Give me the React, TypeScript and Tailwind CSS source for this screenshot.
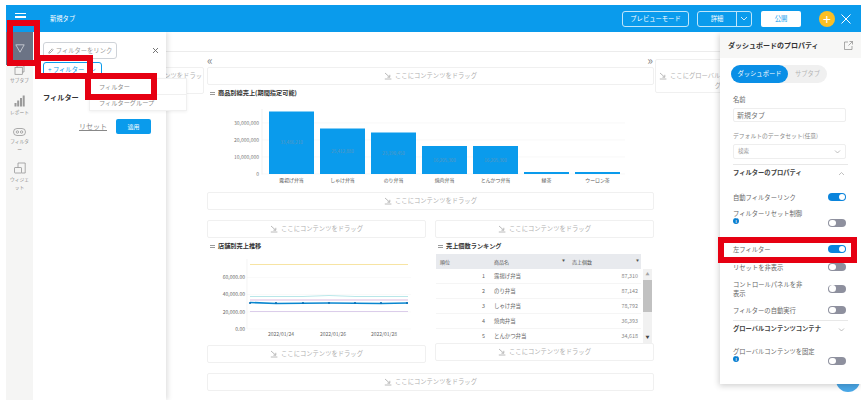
const FONT = "font-['Noto_Sans_CJK_JP','Noto_Sans',sans-serif]";

function DragIcon() {
  return (
    <svg width="8" height="8" viewBox="0 0 8 8" className="shrink-0" fill="none" stroke="#a8a8a8" strokeWidth="0.8">
      <path d="M1 1 L5.5 5 M5.8 2.8 V5.2 H3.4 M0.8 7 H7.4" />
    </svg>
  );
}

function DropZone({ className = "" }: { className?: string }) {
  return (
    <div className={`h-[18px] flex items-center justify-center gap-[3px] border border-[#f0f0f0] rounded-[2px] text-[6.3px] text-[#b0b0b0] ${className}`}>
      <DragIcon />
      <span>ここにコンテンツをドラッグ</span>
    </div>
  );
}

function Title({ children }: { children: React.ReactNode }) {
  return (
    <div className="h-[16px] flex items-center gap-[3px] pl-[3px] text-[6.2px] font-bold text-[#333]">
      <span className="w-[5px] h-[3px] border-y border-[#9a9a9a] shrink-0" />
      <span>{children}</span>
    </div>
  );
}

function SideItem({ icon, label, className = "" }: { icon: React.ReactNode; label: React.ReactNode; className?: string }) {
  return (
    <div className={`flex flex-col items-center text-[4.7px] leading-[7.5px] text-[#8a8a8a] text-center ${className}`}>
      {icon}
      <span className="mt-[2px] w-[20px]">{label}</span>
    </div>
  );
}

function Toggle({ on = false }: { on?: boolean }) {
  return (
    <span className={`w-[18px] h-[8px] rounded-full flex items-center shrink-0 px-[1px] ${on ? "bg-[#0a84dc] justify-end" : "bg-[#8e909e] justify-start"}`}>
      <span className="w-[6.5px] h-[6.5px] rounded-full bg-white" />
    </span>
  );
}

function Info() {
  return (
    <span className="w-[6px] h-[6px] rounded-full bg-[#0a7fd0] flex items-center justify-center text-[4px] leading-none font-bold text-white">i</span>
  );
}

function Chevron({ up = false }: { up?: boolean }) {
  return (
    <svg width="7" height="5" viewBox="0 0 7 5" fill="none" stroke="#a5a5a5" strokeWidth="0.7">
      <path d={up ? "M1 4 L3.5 1.5 L6 4" : "M1 1.5 L3.5 4 L6 1.5"} />
    </svg>
  );
}

function BarChart() {
  const bars = [
    [269, 110.5, "露揚げ弁当"],
    [320, 127.5, "しゃけ弁当"],
    [371, 131.5, "のり弁当"],
    [422, 145, "焼肉弁当"],
    [473, 145, "とんかつ弁当"],
    [524, 171, "緑茶"],
    [575, 171, "ウーロン茶"],
  ] as const;
  const ticks = [["30,000,000", 122], ["20,000,000", 139], ["10,000,000", 156], ["0", 173]] as const;
  return (
    <svg viewBox="207 100 447 91" width="447" height="91" className="block">
      {ticks.map(([t, y]) => (
        <g key={t}>
          <line x1="262" x2="625" y1={y} y2={y} stroke="#f3f3f3" strokeWidth="0.6" />
          <text x="259" y={y + 1.8} textAnchor="end" fontSize="5" fill="#777">{t}</text>
        </g>
      ))}
      <line x1="262" x2="262" y1="108" y2="173.5" stroke="#e8e8e8" strokeWidth="0.6" />
      {bars.map(([x, y, label]) => (
        <g key={label}>
          <rect x={x} y={y} width="45" height={173 - y} fill="#0a9bec" />
          {y < 160 && (
            <text x={x + 22.5} y={(y + 173) / 2 + 1.5} textAnchor="middle" fontSize="4.5" fill="#5d97bd">
              {y < 120 ? "33,486,210" : y < 130 ? "25,412,880" : y < 140 ? "23,190,450" : "16,205,300"}
            </text>
          )}
          <text x={x + 22.5} y="181" textAnchor="middle" fontSize="4.9" fill="#555">{label}</text>
        </g>
      ))}
    </svg>
  );
}

function LineChart() {
  const ticks = [["60,000.00", 276.5], ["40,000.00", 293.5], ["20,000.00", 311], ["0.00", 328]] as const;
  const dots = [250, 276, 303, 329, 355, 381, 407];
  return (
    <svg viewBox="207 253 219 91" width="219" height="91" className="block">
      {ticks.map(([t, y]) => (
        <g key={t}>
          <line x1="247" x2="411" y1={y} y2={y} stroke="#f6f6f6" strokeWidth="0.6" />
          <text x="245" y={y + 1.8} textAnchor="end" fontSize="5" fill="#666">{t}</text>
        </g>
      ))}
      <line x1="247" x2="247" y1="258" y2="328" stroke="#ececec" strokeWidth="0.6" />
      <line x1="250" x2="408" y1="263.5" y2="263.5" stroke="#f5dd8c" strokeWidth="0.8" />
      <path d="M250 295.5 L303 295.5 L329 294.5 L355 295.5 L408 295.5" fill="none" stroke="#9bdce0" strokeWidth="0.7" />
      <line x1="250" x2="408" y1="299" y2="299" stroke="#c08fc9" strokeWidth="0.6" />
      <path d="M250 301.5 L276 302.5 L329 302 L381 302.5 L408 302" fill="none" stroke="#0a86cf" strokeWidth="1.6" />
      {dots.map((x) => <circle key={x} cx={x} cy="302" r="1.1" fill="#0a6fb4" />)}
      <line x1="250" x2="408" y1="310.5" y2="310.5" stroke="#cdb9e3" strokeWidth="0.7" />
      {[["2022/01/24", 281], ["2022/01/26", 333], ["2022/01/28", 384]].map(([t, x]) => (
        <text key={t} x={x} y="335" textAnchor="middle" fontSize="5" fill="#666">{t}</text>
      ))}
    </svg>
  );
}

function RankTable() {
  const rows = [
    [1, "露揚げ弁当", "87,310"],
    [2, "のり弁当", "87,142"],
    [3, "しゃけ弁当", "78,792"],
    [4, "焼肉弁当", "36,393"],
    [5, "とんかつ弁当", "34,618"],
  ] as const;
  return (
    <div className="ml-[1px] text-[5.4px] text-[#666]">
      <div className="w-[205px] h-[15px] bg-[#e8eaee] grid grid-cols-[54px_78px_73px] items-center text-[#555] text-[5px]">
        <span className="pl-[4px]">順位</span>
        <span className="pl-[4px] pr-[3px] flex items-center justify-between"><span>商品名</span><span className="text-[3px]">▼</span></span>
        <span className="pl-[4px] pr-[2px] flex items-center justify-between"><span>売上個数</span><span className="text-[3px]">▼</span></span>
      </div>
      <div className="flex h-[74px]">
        <div className="w-[205px] overflow-hidden">
          {rows.map(([n, name, v]) => (
            <div key={n} className="h-[15px] shrink-0 grid grid-cols-[54px_78px_73px] items-center border-b border-[#f5f5f5]">
              <span className="text-right pr-[5px]">{n}</span>
              <span className="pl-[4px]">{name}</span>
              <span className="text-right pr-[3px] text-[#888]">{v}</span>
            </div>
          ))}
        </div>
        <div className="ml-[2px] w-[9px] bg-[#f1f1f1] flex flex-col items-center justify-between">
          <span className="h-[11px] text-[4px] leading-[11px] text-[#a5a5a5]">▲</span>
          <span className="w-full h-[32px] bg-[#c1c1c1] mb-auto" />
          <span className="h-[11px] text-[4px] leading-[11px] text-[#444]">▼</span>
        </div>
      </div>
    </div>
  );
}

function PanelRow({ children, toggle = false, on = false, className = "", h = "h-[10px]" }: { children: React.ReactNode; toggle?: boolean; on?: boolean; className?: string; h?: string }) {
  return (
    <div className={`flex items-center justify-between pr-[2px] ${h} ${className}`}>
      <div className="w-[72px] leading-[9px]">{children}</div>
      {toggle && <Toggle on={on} />}
    </div>
  );
}

export default function App() {
  return (
    <div className={`relative w-[861px] h-[400px] overflow-hidden bg-white pl-[6px] pt-[5px] ${FONT}`}>
      {/* header */}
      <header className="relative z-20 h-[27px] bg-[#0a9bec] flex items-center text-white text-[6.3px]">
        <div className="ml-[9px] -mt-[3px] w-[11px] flex flex-col gap-[2px]">
          <span className="h-[1.3px] bg-white" /><span className="h-[1.3px] bg-white" /><span className="h-[1.3px] bg-white" />
        </div>
        <span className="ml-[24px]">新規タブ</span>
        <div className="ml-auto flex items-center">
          <span className="w-[67px] h-[16px] flex items-center justify-center border border-[#bfe6fb] rounded-[3px]">プレビューモード</span>
          <div className="ml-[8px] w-[55px] h-[16px] flex border border-[#bfe6fb] rounded-[3px]">
            <span className="w-[39px] flex items-center justify-center border-r border-[#bfe6fb]">詳細</span>
            <span className="flex-1 flex items-center justify-center">
              <svg width="8" height="5" viewBox="0 0 8 5" fill="none" stroke="white" strokeWidth="0.8"><path d="M1 1 L4 4 L7 1" /></svg>
            </span>
          </div>
          <span className="ml-[9px] w-[40px] h-[16px] flex items-center justify-center bg-white rounded-[2px] text-[#0a9bec]">公開</span>
          <span className="ml-[18px] w-[16px] h-[16px] rounded-full bg-[#fbbf24] flex items-center justify-center text-[14px] leading-none text-white">+</span>
          <svg className="ml-[6px] mr-[10px]" width="10" height="10" viewBox="0 0 10 10" stroke="white" strokeWidth="1" fill="none"><path d="M0.5 0.5 L9.5 9.5 M9.5 0.5 L0.5 9.5" /></svg>
        </div>
      </header>

      <div className="flex h-[368px]">
        {/* sidebar */}
        <aside className="relative z-20 w-[27px] shrink-0 bg-[#f5f5f4] flex flex-col items-center">
          <div className="w-full h-[33px] bg-[#6b7385] flex items-center justify-center">
            <svg width="10" height="9" viewBox="0 0 10 9" fill="none" stroke="#d5d8de" strokeWidth="0.8"><path d="M0.8 0.8 H9.2 L5 8.2 Z" /></svg>
          </div>
          <SideItem label="サブタブ" icon={
            <svg width="11" height="10" viewBox="0 0 11 10" fill="none" stroke="#8a8a8a" strokeWidth="0.7"><path d="M3 2.5 V0.8 H10 V7 H8.3" /><rect x="1" y="2.5" width="7.3" height="6.8" /></svg>
          } />
          <SideItem className="mt-[10px]" label="レポート" icon={
            <svg width="11" height="12" viewBox="0 0 11 12" fill="#9a9a9a"><rect x="0.5" y="8" width="2" height="3.5" /><rect x="3.2" y="5.5" width="2" height="6" /><rect x="6" y="3" width="2" height="8.5" /><rect x="8.7" y="0.5" width="2" height="11" /></svg>
          } />
          <SideItem className="mt-[12px]" label="フィルター" icon={
            <svg width="13" height="8" viewBox="0 0 13 8" fill="none" stroke="#8a8a8a" strokeWidth="0.7"><rect x="0.5" y="0.5" width="12" height="7" rx="3.5" /><circle cx="4.4" cy="4" r="1.2" /><circle cx="8.6" cy="4" r="1.2" /></svg>
          } />
          <SideItem className="mt-[9px]" label="ウィジェット" icon={
            <svg width="12" height="12" viewBox="0 0 12 12" fill="none" stroke="#8a8a8a" strokeWidth="0.7"><rect x="0.5" y="5.5" width="7" height="5.5" rx="0.6" /><path d="M4 5.5 V1 H11.2 V11 H7.5" /></svg>
          } />
        </aside>

        {/* filter panel */}
        <section className="relative z-10 w-[133px] shrink-0 bg-white shadow-[2px_0_5px_rgba(0,0,0,0.12)] pl-[10px] pr-[7px] pt-[10px] text-[6.3px]">
          <div className="flex items-center justify-between">
            <span className="w-[74px] h-[17px] flex items-center justify-center gap-[2px] border border-[#cfd3d8] rounded-[3px] text-[#9a9a9a]">
              <svg width="6" height="6" viewBox="0 0 6 6" fill="none" stroke="#999" strokeWidth="0.8"><path d="M0.8 5.2 L1 4 L4.2 0.8 L5.2 1.8 L2 5 Z" /></svg>
              フィルターをリンク
            </span>
            <svg width="7" height="7" viewBox="0 0 7 7" stroke="#666" strokeWidth="0.9"><path d="M1 1 L6 6 M6 1 L1 6" /></svg>
          </div>
          <div className="mt-[3px] w-[59px] h-[16px] flex items-center justify-between pl-[4px] pr-[5px] border border-[#0a9bec] rounded-[3px] text-[#0a9bec]">
            <span>+ フィルター</span>
            <svg width="5" height="4" viewBox="0 0 5 4" fill="none" stroke="#0a9bec" strokeWidth="0.6"><path d="M0.5 0.8 L2.5 3 L4.5 0.8" /></svg>
          </div>
          <div className="mt-[13px] h-[12px] flex items-center text-[7.2px] font-bold text-[#333]">フィルター</div>
          <div className="mt-[16px] pr-[8px] flex items-center justify-end gap-[9px]">
            <span className="underline text-[#888] text-[7px]">リセット</span>
            <span className="w-[35px] h-[15px] bg-[#0a9bec] rounded-[2px] flex items-center justify-center text-white text-[6px]">適用</span>
          </div>
        </section>

        {/* main */}
        <main className="relative flex-1 min-w-0 overflow-hidden flex flex-col">
          <div className="h-[20px] shrink-0 border-b border-[#ececec]" />
          <div className="flex">
            <div className="w-[41px] shrink-0 flex justify-end pt-[15px] pr-[3px]">
              <div className="shrink-0 w-[124px] h-[27px] border border-[#f0f0f0] rounded-[2px] text-right pr-[1px] pt-[3px] text-[6.3px] text-[#b0b0b0] overflow-hidden whitespace-nowrap">ここにコンテンツをドラッ</div>
            </div>
            <div className="w-[447px] shrink-0">
              <div className="h-[15px] flex items-center justify-between text-[12px] leading-none text-[#888]">
                <span>«</span><span className="mr-[1px]">»</span>
              </div>
              <DropZone />
              <div className="h-[107px]">
                <Title>商品別線売上(期間指定可能)</Title>
                <BarChart />
              </div>
              <DropZone />
              <div className="mt-[10px] flex gap-[9px]">
                <div className="w-[219px]">
                  <DropZone />
                  <Title>店舗別売上推移</Title>
                  <LineChart />
                  <DropZone />
                </div>
                <div className="w-[219px]">
                  <DropZone />
                  <Title>売上個数ランキング</Title>
                  <RankTable />
                  <DropZone />
                </div>
              </div>
              <DropZone className="mt-[10px]" />
            </div>
            <div className="ml-[1px] pt-[7px] shrink-0">
              <div className="w-[124px] h-[34px] border border-[#f0f0f0] rounded-[2px] pt-[12px] pl-[2px] text-center leading-[8px] text-[6.3px] text-[#b0b0b0] whitespace-nowrap">
                <span className="inline-flex items-center gap-[3px]"><DragIcon />ここにグローバルコンテンツをドラッ</span>
                <br />グ
              </div>
            </div>
          </div>
        </main>

        {/* properties panel */}
        <aside className="relative z-10 w-[141px] h-[352px] shrink-0 bg-white shadow-[-1px_2px_6px_rgba(0,0,0,0.18)] text-[6.3px] text-[#666]">
          <div className="h-[26px] bg-[#f7f7f6] flex items-center justify-between pl-[8px] pr-[8px] text-[7px] font-bold text-[#333]">
            <span>ダッシュボードのプロパティ</span>
            <svg width="9" height="9" viewBox="0 0 9 9" fill="none" stroke="#888" strokeWidth="0.7"><path d="M4 1 H0.5 V8.5 H8 V5 M5.5 0.5 H8.5 V3.5 M8.5 0.5 L4.5 4.5" /></svg>
          </div>
          <div className="px-[13px]">
            <div className="mt-[7px] -ml-[2px] w-[96px] h-[18px] rounded-full bg-[#f0f0f0] flex items-center">
              <span className="w-[57px] h-full rounded-full bg-[#0a8fe6] text-white flex items-center justify-center">ダッシュボード</span>
              <span className="flex-1 text-center text-[#b5b5b5]">サブタブ</span>
            </div>
            <div className="mt-[12px] h-[10px] leading-[10px]">名前</div>
            <div className="mt-[3px] w-[113px] h-[14px] border border-[#eeeeee] rounded-[2px] flex items-center pl-[3px] text-[7px] text-[#777]">新規タブ</div>
            <div className="mt-[9px] h-[10px] leading-[10px] text-[#888] text-[5.8px]">デフォルトのデータセット(任意)</div>
            <div className="mt-[3px] w-[113px] h-[15px] border border-[#eeeeee] rounded-[2px] flex items-center justify-between px-[4px] text-[5.5px] text-[#999]">検索<Chevron /></div>
            <div className="mt-[5px] border-t border-[#e8e8e8]" />
            <div className="h-[16px] flex items-center justify-between pr-[3px] font-bold text-[#444]"><span>フィルターのプロパティ</span><Chevron up /></div>
            <PanelRow toggle on className="mt-[11px]">自動フィルターリンク</PanelRow>
            <div className="mt-[7px] h-[19px] flex items-end justify-between pr-[2px]">
              <div className="leading-[9px] h-full">フィルターリセット制御<br /><Info /></div>
              <span className="mb-[1px]"><Toggle /></span>
            </div>
            <PanelRow toggle on className="mt-[16px]">左フィルター</PanelRow>
            <PanelRow toggle className="mt-[8px]">リセットを非表示</PanelRow>
            <PanelRow toggle className="mt-[7px]" h="h-[19px]">コントロールパネルを非表示</PanelRow>
            <PanelRow toggle className="mt-[7px]">フィルターの自動実行</PanelRow>
            <div className="mt-[5px] border-t border-[#e8e8e8]" />
            <div className="h-[16px] flex items-center justify-between pr-[3px] font-bold text-[#444]"><span>グローバルコンテンツコンテナ</span><Chevron /></div>
            <div className="mt-[10px] h-[19px] flex items-end justify-between pr-[2px]">
              <div className="leading-[9px] h-full">グローバルコンテンツを固定<br /><Info /></div>
              <span className="mb-[1px]"><Toggle /></span>
            </div>
          </div>
        </aside>
      </div>

      {/* floating help button, mostly hidden by the panel */}
      <span className="absolute left-[836px] top-[368px] w-[24px] h-[24px] rounded-full bg-[#4aa8e8]" />

      {/* dropdown menu */}
      <div className="absolute z-30 left-[89px] top-[78px] w-[98px] h-[33px] bg-white border border-[#f0f0f0] shadow-[0_1px_3px_rgba(0,0,0,0.06)] text-[6.2px] text-[#888]">
        <div className="h-[16px] pl-[9px] flex items-center border-b border-[#f0f0f0]">フィルター</div>
        <div className="h-[16px] pl-[9px] flex items-center">フィルターグループ</div>
      </div>

      {/* red annotation boxes */}
      <div className="absolute z-40 left-[7px] top-[20px] w-[33px] h-[46px] border-[6px] border-[#e60012]" />
      <div className="absolute z-40 left-[35px] top-[55px] w-[58px] h-[24px] border-[6px] border-[#e60012]" />
      <div className="absolute z-40 left-[85px] top-[73px] w-[72px] h-[27px] border-[6px] border-[#e60012]" />
      <div className="absolute z-40 left-[718px] top-[237px] w-[139px] h-[26px] border-[6px] border-[#e60012]" />
    </div>
  );
}
